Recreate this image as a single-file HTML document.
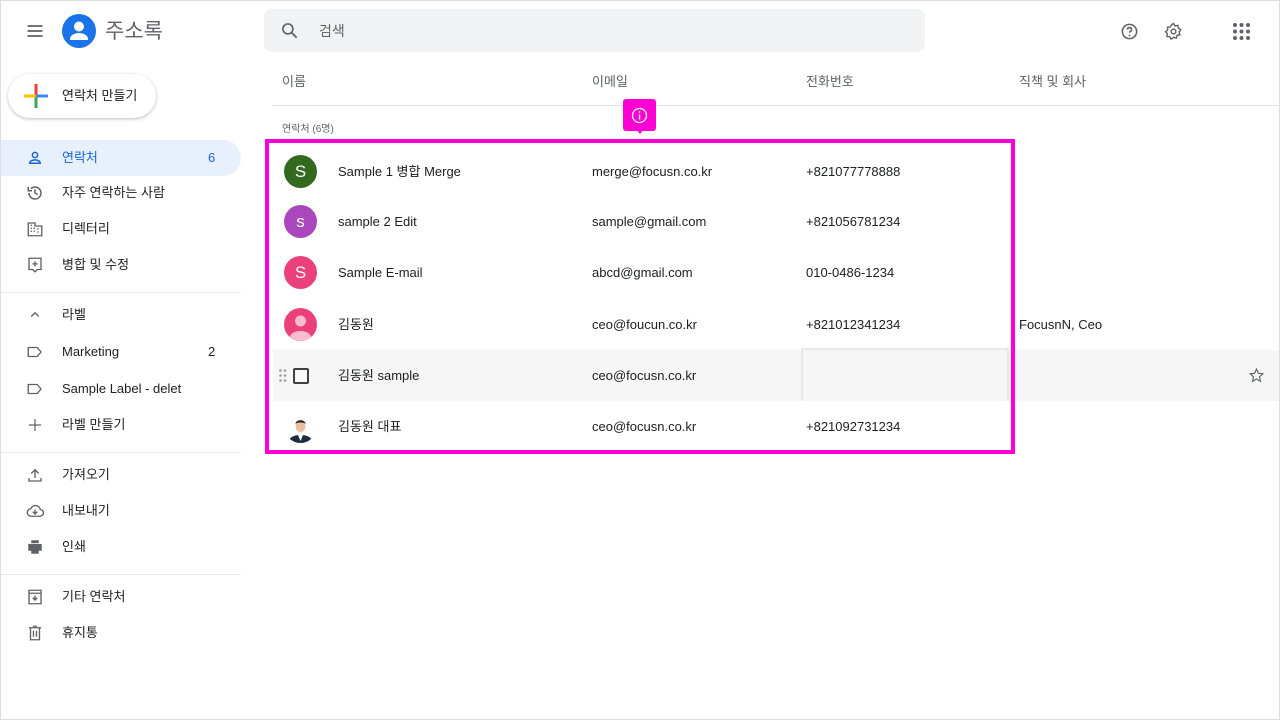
<!DOCTYPE html>
<html><head><meta charset="utf-8"><style>
*{box-sizing:border-box;margin:0;padding:0}
body{width:1280px;height:720px;overflow:hidden;background:#fff;font-family:"Liberation Sans","Noto Sans CJK KR",sans-serif;color:#202124;position:relative;border:1px solid #ddd}
.abs{position:absolute}
.nav{position:absolute;left:0;width:240px;height:36px;font-size:13px;color:#202124;line-height:36px}
.nav .ic{position:absolute;left:25px;top:9px;width:18px;height:18px}
.nav .t{position:absolute;left:61px;top:0}
.nav .n{position:absolute;left:207px;top:0}
.div{position:absolute;left:0;width:240px;height:1px;background:#e8eaed}
.row{position:absolute;left:272px;width:1006px;height:51px;font-size:13px;line-height:51px}
.row span{position:absolute;top:0;height:51px;line-height:51px}
.av{position:absolute;left:11px;top:9px;width:33px;height:33px;border-radius:50%;color:#fff;font-size:17px;text-align:center;line-height:33px}
.hd{position:absolute;top:72px;font-size:13px;color:#5f6368;line-height:18px}
</style></head><body>
<svg class="abs" style="left:24px;top:20px" width="20" height="20" viewBox="0 0 24 24"><path d="M3 6h18M3 12h18M3 18h18" stroke="#5f6368" stroke-width="2"/></svg>
<svg class="abs" style="left:61px;top:13px" width="34" height="34" viewBox="0 0 34 34"><circle cx="17" cy="17" r="17" fill="#1a73e8"/><circle cx="17" cy="12.5" r="5" fill="#fff"/><path d="M8 25c0-4 5-6 9-6s9 2 9 6v1H8z" fill="#fff"/></svg>
<div class="abs" style="left:104px;top:17px;font-size:21px;color:#5f6368;line-height:28px">주소록</div>
<div class="abs" style="left:263px;top:8px;width:661px;height:43px;background:#f1f3f4;border-radius:8px"></div>
<svg class="abs" style="left:279px;top:20px" width="20" height="20" viewBox="0 0 24 24"><circle cx="9.5" cy="9.5" r="6" fill="none" stroke="#5f6368" stroke-width="2"/><path d="M14 14l6 6" stroke="#5f6368" stroke-width="2.2"/></svg>
<div class="abs" style="left:318px;top:21px;font-size:14px;color:#5f6368;line-height:18px">검색</div>
<svg class="abs" style="left:1119px;top:21px" width="19" height="19" viewBox="0 0 24 24"><circle cx="12" cy="12" r="9" fill="none" stroke="#5f6368" stroke-width="2"/><path d="M9.5 9.5a2.5 2.5 0 1 1 3.5 2.3c-.8.4-1 .9-1 1.7" fill="none" stroke="#5f6368" stroke-width="2"/><circle cx="12" cy="17" r="1.2" fill="#5f6368"/></svg>
<svg class="abs" style="left:1163px;top:21px" width="19" height="19" viewBox="0 0 24 24"><path d="M12 2l2 3 3.5-.8.6 3.5 3 2-2 3 1 3.4-3.5.8-1 3.4-3.4-1L9 21.6l-1.8-3-3.5-.4.6-3.5L2 12.4l2.7-2.3L4.4 6.6l3.5-.3L10 3z" fill="none" stroke="#5f6368" stroke-width="1.8"/><circle cx="12" cy="12" r="3" fill="none" stroke="#5f6368" stroke-width="1.8"/></svg>
<svg class="abs" style="left:1232px;top:22px" width="17" height="17" viewBox="0 0 17 17" fill="#5f6368"><circle cx="2" cy="2" r="2"/><circle cx="8.5" cy="2" r="2"/><circle cx="15" cy="2" r="2"/><circle cx="2" cy="8.5" r="2"/><circle cx="8.5" cy="8.5" r="2"/><circle cx="15" cy="8.5" r="2"/><circle cx="2" cy="15" r="2"/><circle cx="8.5" cy="15" r="2"/><circle cx="15" cy="15" r="2"/></svg>
<div class="abs" style="left:7px;top:73px;width:148px;height:44px;border-radius:22px;background:#fff;box-shadow:0 1px 3px rgba(60,64,67,.35)"></div>
<svg class="abs" style="left:23px;top:83px" width="24" height="24" viewBox="0 0 24 24"><rect x="10.5" y="0" width="3" height="12" fill="#ea4335"/><rect x="10.5" y="12" width="3" height="12" fill="#34a853"/><rect x="0" y="10.5" width="12" height="3" fill="#fbbc04"/><rect x="12" y="10.5" width="12" height="3" fill="#4285f4"/></svg>
<div class="abs" style="left:61px;top:86px;font-size:13px;line-height:18px">연락처 만들기</div>
<div class="abs" style="left:0;top:139px;width:240px;height:36px;background:#e8f0fe;border-radius:0 18px 18px 0"></div>
<div class="nav" style="top:139px;color:#1967d2"><svg class="ic" viewBox="0 0 24 24"><circle cx="12" cy="8" r="3.5" fill="none" stroke="#1967d2" stroke-width="2"/><path d="M5 19c0-3 4-4.5 7-4.5s7 1.5 7 4.5z" fill="none" stroke="#1967d2" stroke-width="2"/></svg><span class="t">연락처</span><span class="n">6</span></div>
<div class="nav" style="top:174px"><svg class="ic" viewBox="0 0 24 24"><path d="M4 12a8 8 0 1 0 2.5-5.8M3 4v5h5M12 7v5l3.5 2" fill="none" stroke="#5f6368" stroke-width="2"/></svg><span class="t">자주 연락하는 사람</span></div>
<div class="nav" style="top:210px"><svg class="ic" viewBox="0 0 24 24"><path d="M3 21V4h9v4h9v13zM6 7h2M6 11h2M6 15h2M10 11h2M10 15h2M15 12h2M15 16h2" fill="none" stroke="#5f6368" stroke-width="1.8"/></svg><span class="t">디렉터리</span></div>
<div class="nav" style="top:246px"><svg class="ic" viewBox="0 0 24 24"><path d="M4 3h16v15h-5l-3 3-3-3H4zM12 7v7M8.5 10.5h7" fill="none" stroke="#5f6368" stroke-width="1.8"/></svg><span class="t">병합 및 수정</span></div>
<div class="div" style="top:291px"></div>
<div class="nav" style="top:296px"><svg class="ic" viewBox="0 0 24 24"><path d="M7 14l5-5 5 5" fill="none" stroke="#5f6368" stroke-width="1.8"/></svg><span class="t">라벨</span></div>
<div class="nav" style="top:333px"><svg class="ic" viewBox="0 0 24 24"><path d="M3 6h12l5 6-5 6H3z" fill="none" stroke="#5f6368" stroke-width="1.8"/></svg><span class="t">Marketing</span><span class="n">2</span></div>
<div class="nav" style="top:370px"><svg class="ic" viewBox="0 0 24 24"><path d="M3 6h12l5 6-5 6H3z" fill="none" stroke="#5f6368" stroke-width="1.8"/></svg><span class="t">Sample Label - delet</span></div>
<div class="nav" style="top:406px"><svg class="ic" viewBox="0 0 24 24"><path d="M12 4v16M4 12h16" fill="none" stroke="#5f6368" stroke-width="1.6"/></svg><span class="t">라벨 만들기</span></div>
<div class="div" style="top:451px"></div>
<div class="nav" style="top:456px"><svg class="ic" viewBox="0 0 24 24"><path d="M12 16V5M7 10l5-5 5 5M4 16v4h16v-4" fill="none" stroke="#5f6368" stroke-width="1.8"/></svg><span class="t">가져오기</span></div>
<div class="nav" style="top:492px"><svg class="ic" viewBox="0 0 24 24"><path d="M7 19a5 5 0 0 1-.5-10A6.5 6.5 0 0 1 19 10a4.5 4.5 0 0 1-.5 9zM12 10v6M9 13l3 3 3-3" fill="none" stroke="#5f6368" stroke-width="1.8"/></svg><span class="t">내보내기</span></div>
<div class="nav" style="top:528px"><svg class="ic" viewBox="0 0 24 24"><path d="M7 3h10v4H7zM3 8h18v9h-4v4H7v-4H3zM8 14h8v5H8z" fill="#5f6368"/></svg><span class="t">인쇄</span></div>
<div class="div" style="top:573px"></div>
<div class="nav" style="top:578px"><svg class="ic" viewBox="0 0 24 24"><path d="M4 3h16v18H4zM4 7h16M12 10v6M9 13l3 3 3-3" fill="none" stroke="#5f6368" stroke-width="1.8"/></svg><span class="t">기타 연락처</span></div>
<div class="nav" style="top:614px"><svg class="ic" viewBox="0 0 24 24"><path d="M4 5h16M9 3h6M6 5v16h12V5M10 9v8M14 9v8" fill="none" stroke="#5f6368" stroke-width="1.8"/></svg><span class="t">휴지통</span></div>
<div class="hd" style="left:281px">이름</div>
<div class="hd" style="left:591px">이메일</div>
<div class="hd" style="left:805px">전화번호</div>
<div class="hd" style="left:1018px">직책 및 회사</div>
<div class="abs" style="left:271px;top:104px;width:1007px;height:1px;background:#e0e0e0"></div>
<div class="abs" style="left:281px;top:122px;font-size:10px;color:#5f6368;line-height:14px">연락처 (6명)</div>
<div class="row" style="top:145px"><div class="av" style="background:#33691e">S</div><span style="left:65px">Sample 1 병합 Merge</span><span style="left:319px">merge@focusn.co.kr</span><span style="left:533px">+821077778888</span></div>
<div class="row" style="top:195px"><div class="av" style="background:#ab47bc">s</div><span style="left:65px">sample 2 Edit</span><span style="left:319px">sample@gmail.com</span><span style="left:533px">+821056781234</span></div>
<div class="row" style="top:246px"><div class="av" style="background:#ec407a">S</div><span style="left:65px">Sample E-mail</span><span style="left:319px">abcd@gmail.com</span><span style="left:533px">010-0486-1234</span></div>
<div class="row" style="top:298px"><div class="av" style="background:#ec407a;overflow:hidden"><svg width="33" height="33" viewBox="0 0 33 33"><circle cx="16.5" cy="13" r="5.5" fill="#f8bbd0"/><path d="M5 33c0-8 6-10 11.5-10S28 25 28 33z" fill="#f8bbd0"/></svg></div><span style="left:65px">김동원</span><span style="left:319px">ceo@foucun.co.kr</span><span style="left:533px">+821012341234</span><span style="left:746px">FocusnN, Ceo</span></div>
<div class="row" style="top:349px;background:#f6f6f6"><svg class="abs" style="left:6px;top:19px" width="8" height="13" viewBox="0 0 8 13" fill="#9aa0a6"><circle cx="1.5" cy="1.5" r="1.3"/><circle cx="6" cy="1.5" r="1.3"/><circle cx="1.5" cy="6.5" r="1.3"/><circle cx="6" cy="6.5" r="1.3"/><circle cx="1.5" cy="11.5" r="1.3"/><circle cx="6" cy="11.5" r="1.3"/></svg><div class="abs" style="left:20px;top:18px;width:16px;height:16px;border:2px solid #3c4043;border-radius:2px"></div><span style="left:65px">김동원 sample</span><span style="left:319px">ceo@focusn.co.kr</span><div class="abs" style="left:528px;top:-2px;width:208px;height:53px;border:2px solid #e8e8e8;border-bottom:none;background:#f6f6f6"></div><svg class="abs" style="left:975px;top:17px" width="17" height="17" viewBox="0 0 24 24"><path d="M12 3l2.7 6 6.3.6-4.8 4.3 1.4 6.3L12 17l-5.6 3.2 1.4-6.3L3 9.6 9.3 9z" fill="none" stroke="#5f6368" stroke-width="1.6"/></svg></div>
<div class="row" style="top:400px"><div class="av" style="background:#fff;overflow:hidden"><svg width="33" height="33" viewBox="0 0 33 33"><path d="M4 33c1-6 6-8 12.5-8S28 27 29 33z" fill="#1c2a44"/><path d="M14 25l2.5 6 2.5-6z" fill="#fff"/><ellipse cx="16.5" cy="16" rx="5" ry="6" fill="#e8bfa0"/><path d="M11.5 14c0-5 10-5 10 0-1-2-9-2-10 0z" fill="#222"/></svg></div><span style="left:65px">김동원 대표</span><span style="left:319px">ceo@focusn.co.kr</span><span style="left:533px">+821092731234</span></div>
<div class="abs" style="left:264px;top:138px;width:750px;height:315px;border:4px solid #ff00d4"></div>
<div class="abs" style="left:622px;top:98px;width:33px;height:32px;background:#ff00d4;border-radius:3px"></div>
<div class="abs" style="left:634px;top:127px;width:0;height:0;border-left:5px solid transparent;border-right:5px solid transparent;border-top:6px solid #ff00d4"></div>
<svg class="abs" style="left:630px;top:106px" width="17" height="17" viewBox="0 0 17 17"><circle cx="8.5" cy="8.5" r="7" fill="none" stroke="#fff" stroke-width="1.3"/><path d="M8.5 7.5v5" stroke="#fff" stroke-width="1.4"/><circle cx="8.5" cy="5" r="0.9" fill="#fff"/></svg>
</body></html>
